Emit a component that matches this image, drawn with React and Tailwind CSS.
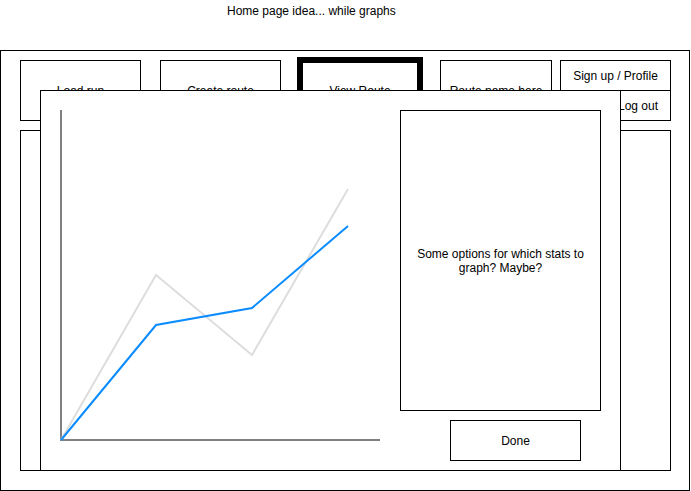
const blue = [
  [61, 440],
  [156, 325],
  [252, 308],
  [348, 226],
];
const grey = [
  [61, 440],
  [156, 275],
  [252, 355],
  [348, 189],
];

const pts = (list) => list.map((p) => p.join(",")).join(" ");

function NavBox({ label, className = "" }) {
  return (
    <div
      className={`flex items-center justify-center border border-black bg-white text-[12px] ${className}`}
    >
      {label}
    </div>
  );
}

function StatsChart() {
  return (
    <svg width="359" height="379" className="shrink-0">
      <g transform="translate(-41,-91)">
        <line x1="61" y1="110" x2="61" y2="441" stroke="#808080" strokeWidth="2" />
        <line x1="60" y1="440" x2="380" y2="440" stroke="#808080" strokeWidth="2" />
        <polyline points={pts(grey)} fill="none" stroke="#dddddd" strokeWidth="2" />
        <polyline points={pts(blue)} fill="none" stroke="#0a8cff" strokeWidth="2" />
      </g>
    </svg>
  );
}

export default function App() {
  return (
    <div
      className="relative w-[691px] h-[491px] bg-white text-black overflow-hidden"
      style={{ fontFamily: '"Liberation Sans", Arial, sans-serif' }}
    >
      <div className="h-[50px] pl-[227px] pt-[4px] text-[12px] leading-[14px]">
        Home page idea... while graphs
      </div>

      <div className="w-[690px] h-[441px] border border-black pl-[19px] pt-[9px]">
        <div className="flex items-start h-[61px]">
          <NavBox label="Load run" className="w-[121px] h-[61px]" />
          <NavBox label="Create route" className="ml-[19px] w-[121px] h-[61px]" />
          <div className="ml-[16px] -mt-[3px] w-[126px] h-[67px] border-[6px] border-black flex items-center justify-center text-[12px]">
            View Route
          </div>
          <NavBox label="Route name here" className="ml-[17px] w-[112px] h-[61px]" />
          <div className="ml-[8px] flex flex-col items-end w-[111px]">
            <NavBox label="Sign up / Profile" className="w-[111px] h-[31px]" />
            <NavBox label="Log out" className="-mt-px w-[66px] h-[31px]" />
          </div>
        </div>

        <div className="flex mt-[9px]">
          <div className="w-[531px] h-[341px] border border-black" />
          <div className="ml-[9px] w-[111px] h-[341px] border border-black" />
        </div>
      </div>

      {/* modal */}
      <div className="absolute left-[40px] top-[90px] w-[581px] h-[381px] border border-black bg-white flex">
        <StatsChart />
        <div className="flex flex-col pt-[19px]">
          <div className="w-[201px] h-[301px] border border-black flex items-center justify-center text-center px-3 text-[12px] leading-[14px]">
            Some options for which stats to graph? Maybe?
          </div>
          <div className="ml-[50px] mt-[9px] w-[131px] h-[41px] border border-black flex items-center justify-center text-[12px]">
            Done
          </div>
        </div>
      </div>
    </div>
  );
}
